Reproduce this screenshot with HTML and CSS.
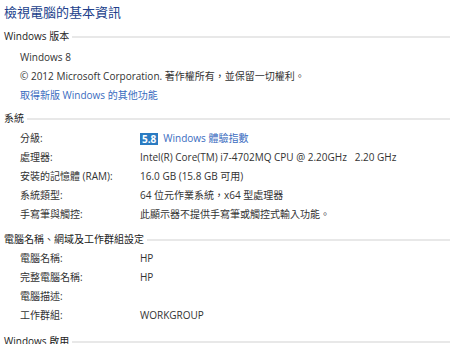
FILE: index.html
```html
<!DOCTYPE html>
<html lang="zh-Hant">
<head>
<meta charset="utf-8">
<link rel="stylesheet" href="styles.css">
</head>
<body>
<div class="page">
  <h1 class="title">檢視電腦的基本資訊</h1>

  <div class="sect s1">
    <div class="head"><span>Windows 版本</span><i class="rule"></i></div>
    <div class="plain">Windows 8</div>
    <div class="plain">© 2012 Microsoft Corporation. 著作權所有，並保留一切權利。</div>
    <div class="plain link">取得新版 Windows 的其他功能</div>
  </div>

  <div class="sect s2">
    <div class="head"><span>系統</span><i class="rule"></i></div>
    <div class="row"><span class="lbl">分級:</span><span class="val"><span class="badge">5.8</span><span class="link">Windows 體驗指數</span></span></div>
    <div class="row"><span class="lbl">處理器:</span><span class="val">Intel(R) Core(TM) i7-4702MQ CPU @ 2.20GHz&nbsp;&nbsp; 2.20 GHz</span></div>
    <div class="row"><span class="lbl">安裝的記憶體 (RAM):</span><span class="val">16.0 GB (15.8 GB 可用)</span></div>
    <div class="row"><span class="lbl">系統類型:</span><span class="val">64 位元作業系統，x64 型處理器</span></div>
    <div class="row"><span class="lbl">手寫筆與觸控:</span><span class="val">此顯示器不提供手寫筆或觸控式輸入功能。</span></div>
  </div>

  <div class="sect s3">
    <div class="head"><span>電腦名稱、網域及工作群組設定</span><i class="rule"></i></div>
    <div class="row"><span class="lbl">電腦名稱:</span><span class="val">HP</span></div>
    <div class="row"><span class="lbl">完整電腦名稱:</span><span class="val">HP</span></div>
    <div class="row"><span class="lbl">電腦描述:</span><span class="val"></span></div>
    <div class="row"><span class="lbl">工作群組:</span><span class="val">WORKGROUP</span></div>
  </div>

  <div class="sect s4">
    <div class="head"><span>Windows 啟用</span><i class="rule"></i></div>
  </div>
</div>
</body>
</html>
```

FILE: styles.css
```css
html, body {
  margin: 0;
  padding: 0;
  background: #ffffff;
}
body {
  font-family: "Open Sans", "Noto Sans CJK TC", sans-serif;
  font-size: 10px;
  color: #333333;
  overflow: hidden;
}
.page {
  padding: 3px 0 0 4px;
}
.title {
  margin: 0;
  font-weight: normal;
  font-size: 13px;
  line-height: 18px;
  color: #213f8c;
}
.sect {
  display: flex;
  flex-direction: column;
}
.head {
  display: flex;
  align-items: center;
  height: 19px;
  color: #222;
}
.head .rule {
  flex: 1;
  height: 2px;
  background: #e8e8e8;
  margin-left: 3px;
  margin-top: 3px;
}
.plain {
  padding-left: 16px;
  height: 19px;
  line-height: 19px;
}
.link { color: #3a6cc0; }
.row {
  display: flex;
  height: 19px;
  line-height: 19px;
  padding-left: 16px;
}
.lbl { width: 120px; flex: none; }
.val { display: flex; align-items: center; }
.badge {
  background: #2a7bc2;
  color: #fff;
  font-weight: bold;
  font-size: 10px;
  line-height: 12px;
  padding: 0 2px;
  margin-right: 5px;
}

.s1 .head { margin-top: 5px; }
.s1 .head + .plain { margin-top: 3px; }
.s2 .head { margin-top: 3px; }
.s2 .head + .row { margin-top: 2px; }
.s3 .head { margin-top: 5px; }
.s3 .head + .row { margin-top: 1px; }
.s4 .head { margin-top: 6px; }
```
